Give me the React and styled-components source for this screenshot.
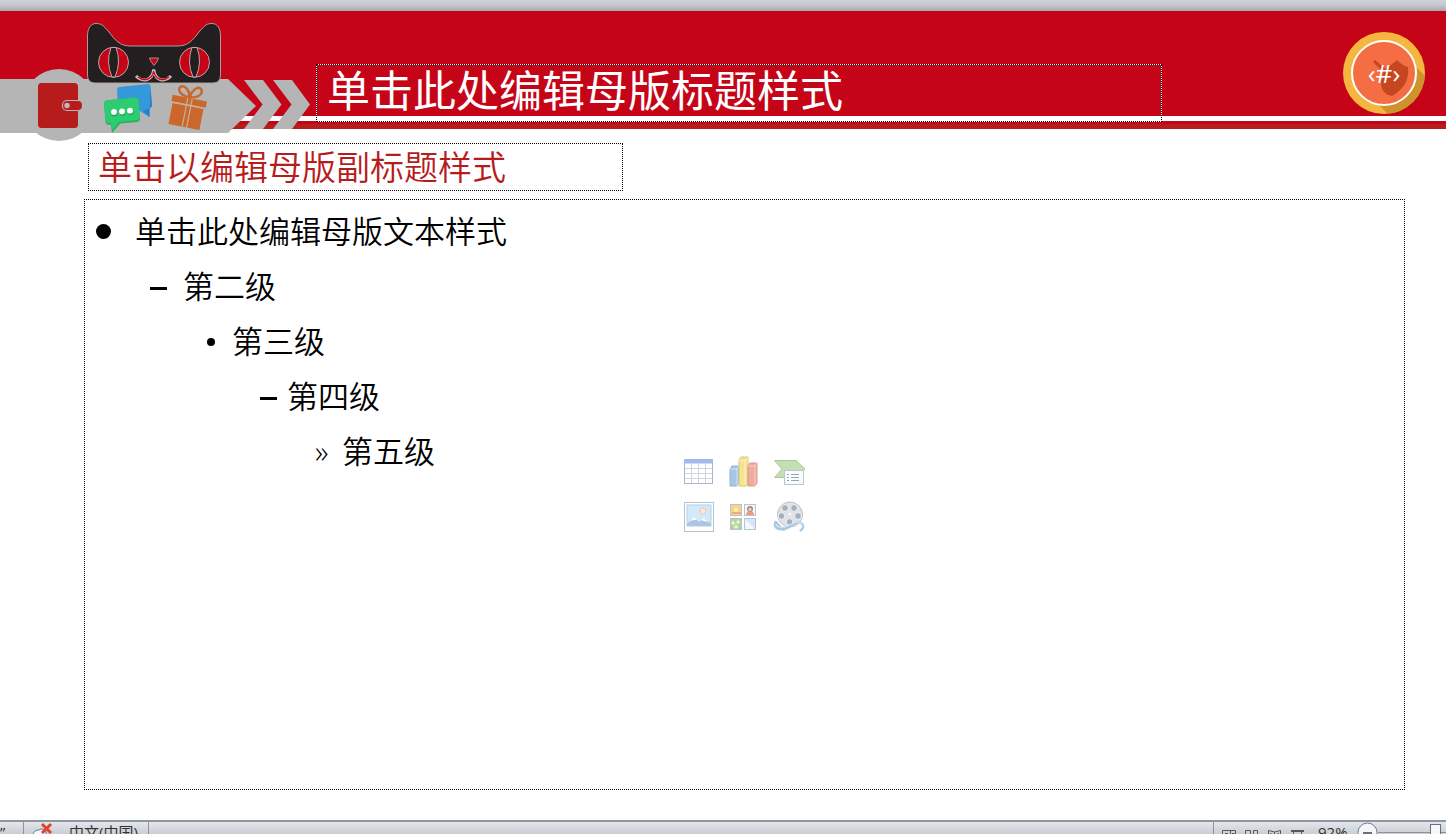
import React from 'react';
import styled, { createGlobalStyle } from 'styled-components';

const GlobalStyle = createGlobalStyle`
  *, *::before, *::after { box-sizing: border-box; }
  body {
    margin: 0;
    font-family: "Open Sans", "Noto Sans CJK SC", sans-serif;
    color: #000;
    overflow: hidden;
  }
  h1, h2, ul { margin: 0; padding: 0; font-weight: 400; }
  button { border: 0; padding: 0; background: none; display: block; }
  svg { display: block; overflow: visible; }
`;

const Page = styled.div`
  display: flex;
  flex-direction: column;
  height: 100vh;
`;

const Backdrop = styled.div`
  flex: 0 0 11px;
  background: linear-gradient(#ced2d7 0, #c5c9ce 5px, #a4a8ad 11px);
`;

const Slide = styled.main`
  flex: 1;
  min-height: 0;
  display: flex;
  flex-direction: column;
  background: #fff;
`;

const Header = styled.header`
  flex: 0 0 118px;
  display: flex;
  align-items: flex-start;
  background: linear-gradient(
    #c60418 105px, #fff 105px, #fff 110px,
    #c60418 110px, #c60418 113px, #b71c1c 113px
  );
`;

const Ribbon = styled.svg`
  flex: none;
  width: 311px;
  height: 130px;
  margin-bottom: -12px;
`;

const TitleBox = styled.h1`
  flex: 0 1 846px;
  height: 58px;
  margin: 53px 0 0 5px;
  padding: 0 10px;
  border: 1px dotted #000;
  background:
    linear-gradient(#fff, #fff) top / 100% 1px no-repeat border-box,
    linear-gradient(#fff, #fff) left / 1px 100% no-repeat border-box,
    linear-gradient(#fff, #fff) right / 1px 100% no-repeat border-box,
    linear-gradient(#fff, #fff) bottom / 100% 1px no-repeat border-box;
  color: #fff;
  font-size: 43px;
  line-height: 52px;
  white-space: nowrap;
`;

const Badge = styled.div`
  flex: none;
  display: grid;
  place-items: center;
  width: 82px;
  height: 82px;
  margin: 21px 21px 0 auto;
  color: #fff;
  font-size: 26px;
  line-height: 32px;

  > * { grid-area: 1 / 1; }
`;

const SubtitleBox = styled.h2`
  flex: 0 0 48px;
  width: 37%;
  margin: 14px 0 0 88px;
  padding: 0 9px;
  border: 1px dotted #000;
  color: #b71c1c;
  font-size: 34px;
  font-weight: 350;
  line-height: 46px;
  white-space: nowrap;
`;

const BodyBox = styled.section`
  flex: 1;
  display: grid;
  margin: 8px 41px 30px 84px;
  border: 1px dotted #000;

  > * { grid-area: 1 / 1; }
`;

const Levels = styled.ul`
  list-style: none;
  padding-top: 4px;
`;

const Level = styled.li`
  display: flex;
  align-items: center;
  height: 55px;
  padding-left: ${(p) => p.$indent}px;
  font-size: 31px;
  line-height: 55px;
  font-weight: 350;
`;

const Marker = styled.span`
  flex: 0 0 ${(p) => p.$width}px;
  line-height: 55px;
`;

const Disc = styled.span`
  display: block;
  width: ${(p) => p.$size}px;
  height: ${(p) => p.$size}px;
  border-radius: 50%;
  background: #000;
`;

const Dash = styled.span`
  display: block;
  width: 17px;
  height: 3px;
  margin-top: 4px;
  background: #000;
`;

const InsertGrid = styled.div`
  place-self: center;
  display: grid;
  grid-template-columns: repeat(3, 30px);
  grid-auto-rows: 30px;
  gap: 14px 15px;
  padding-right: 2px;
  opacity: 0.8;
`;

const StatusBar = styled.footer`
  flex: 0 0 14px;
  display: flex;
  align-items: flex-start;
  overflow: hidden;
  border-top: 2px solid #8d97a3;
  background: linear-gradient(#e3e6ea, #c9ced5);
  color: #333;
  font-size: 15px;
  line-height: 21px;
  white-space: nowrap;
`;

const StatusItem = styled.div`
  flex: none;
  height: 24px;
  width: ${(p) => p.$width}px;
  padding-left: ${(p) => p.$pad || 0}px;
  padding-top: ${(p) => p.$top || 0}px;
  border-right: ${(p) => (p.$divider ? '1px solid #8d939b' : '0')};
`;

const StatusRight = styled.div`
  display: flex;
  margin-left: auto;
  padding-left: 8px;
  border-left: 1px solid #8d939b;
`;

const ViewButton = styled.button`
  width: 23px;
  height: 24px;
  padding-top: 5px;
`;

const ZoomValue = styled.output`
  width: 38px;
  padding-left: 4px;
`;

const ZoomOut = styled.button`
  width: 21px;
  height: 21px;
  margin-left: 5px;
`;

const ZoomSlider = styled.input`
  appearance: none;
  width: 68px;
  height: 20px;
  margin: 1px 0 0;
  background: linear-gradient(#8a929c, #8a929c) 0 9px / 100% 1px no-repeat;

  &::-webkit-slider-thumb {
    appearance: none;
    width: 11px;
    height: 18px;
    border: 1px solid #66707c;
    background: #f6f7f9;
  }
`;

function RibbonArt() {
  return (
    <Ribbon viewBox="0 11 311 130" aria-hidden="true">
      <g fill="#b5b5b5">
        <path d="M0 79H228L256 106L228 133H0Z" />
        <circle cx="59" cy="105" r="36" />
        <path d="M244 80H263L281.500 104.500L263 129H244L262.500 104.500Z" />
        <path d="M273 80H292L310 104.500L292 129H273L291.500 104.500Z" />
      </g>
      <rect x="38" y="83" width="40" height="45" rx="3.500" fill="#b71c1c" />
      <rect x="62.500" y="100.500" width="20" height="10" rx="4.500" fill="#b71c1c" stroke="#b5b5b5" strokeWidth="1.200" />
      <circle cx="67" cy="105.500" r="2.700" fill="#c9b5b5" />

      <path d="M119 87L148 84Q150 84 150.500 86L152 106L149.500 109V117L139 110.500L121 112Q119 112 118.500 110L117 90Q117 87.500 119 87Z" fill="#3498db" />
      <path d="M150.500 88L152 106L149.500 108.500V117L143 111L148 109Q150 108 150 105Z" fill="#2980c9" />
      <path d="M106 100.500L135 97.500Q138 97.500 138.500 100L140 119Q140 121.500 137.500 122L120.500 123.500L112 133L111 125L108.500 125Q106 124.500 105.500 122L104 104Q104 101 106 100.500Z" fill="#27b463" />
      <path d="M106 100.500L135 97.500Q138 97.500 138.500 100L139.500 117Q139.500 119.500 137 120L119 122L112 130L111 123L108.500 123Q106 122.500 105.500 120L104 104Q104 101 106 100.500Z" fill="#2ecc71" />
      <g fill="#229a56"><circle cx="114.500" cy="113.500" r="3" /><circle cx="122.500" cy="112.800" r="3" /><circle cx="130.500" cy="112" r="3" /></g>
      <g fill="#fff"><circle cx="114" cy="112" r="2.900" /><circle cx="122" cy="111.500" r="2.900" /><circle cx="130" cy="110.700" r="2.900" /></g>

      <g transform="rotate(11 188 110)" fill="#cb672a">
        <path d="M170 98H205V104.500H170ZM171.500 106H203V127.500H171.500Z" />
        <path d="M185.500 98V127.500M190 98V127.500M170 105.200H205" stroke="#c4b0a2" strokeWidth="1.200" />
        <path d="M187 97C178 98 174 92 176 89C180 85 186 91 187 97C188 90 193 84 197 87C200 91 196 97 187 97Z" fill="none" stroke="#cb672a" strokeWidth="2.400" />
      </g>

      <path d="M87.500 36C87.500 28 91 23.500 96 23.500C101 23.500 103 25 109 32C115 40 120 46 130 46H178C188 46 193 40 199 32C205 25 207 23.500 212 23.500C217 23.500 220.500 28 220.500 36V75Q220.500 83 213 83H95Q87.500 83 87.500 75Z" fill="#231f20" stroke="#b9a8a8" strokeWidth="0.900" />
      {[113.5, 194.5].map((x) => (
        <g key={x} stroke="#b9a8a8" strokeWidth="1">
          <circle cx={x} cy="62.300" r="15" fill="#c60418" />
          <path d={`M${x - 2.5} 47.500Q${x - 8} 62 ${x - 1.5} 77H${x + 1.5}Q${x + 8} 62 ${x + 2.5} 47.500Z`} fill="#231f20" />
        </g>
      ))}
      <path d="M149.500 58H158.500Q158 61 154 65.500Q150 61 149.500 58Z" fill="#c60418" stroke="#b9a8a8" strokeWidth="0.800" />
      <path d="M136 76C142 82 152 82 153.700 69.500C155.500 82 165 82 171 76" fill="none" stroke="#c9b9b9" strokeWidth="3" />
      <path d="M138 77C143 81 152 81 153.700 71C155.500 81 164 81 169 77" fill="none" stroke="#c60418" strokeWidth="1.300" />
    </Ribbon>
  );
}

function CoinArt() {
  return (
    <svg width="82" height="82" viewBox="0 0 82 82" aria-hidden="true">
      <clipPath id="coin"><circle cx="41" cy="41" r="41" /></clipPath>
      <g clipPath="url(#coin)">
        <rect width="82" height="82" fill="#f5b640" />
        <path d="M72 34L86 48V86H49L35 72Z" fill="#cc942a" />
      </g>
      <circle cx="41" cy="41" r="32" fill="#f46d43" stroke="#fff" strokeWidth="2" />
      <path d="M54 28Q60 34 65 35Q67 54 49 64Q38 62 38 50L40 40L30 30L32 28L43 37Z" fill="#c6461f" />
    </svg>
  );
}

const TableIcon = () => (
  <svg width="30" height="30" viewBox="0 0 30 30">
    <rect x="0.500" y="1.500" width="28" height="24" fill="#fff" stroke="#91a3bf" />
    <rect x="0" y="1" width="29" height="4.500" fill="#8caaea" />
    <path d="M7.500 6V25M14.500 6V25M21.500 6V25M1 10.500H28M1 15.500H28M1 20.500H28" stroke="#c2c9d5" fill="none" />
  </svg>
);

const ChartIcon = () => (
  <svg width="30" height="30" viewBox="0 0 30 30">
    <path d="M1 11L3 8H10V25L8 28H1Z" fill="#8fbbe0" stroke="#7ca0c4" />
    <path d="M1 11H8V28M8 11L10 8" fill="none" stroke="#c4def1" />
    <path d="M10 2L12 -1H19V26L17 28H10Z" fill="#f3dc7d" stroke="#d6b957" />
    <path d="M16 3V27M10 3H17L19 0" fill="none" stroke="#fff1b0" />
    <path d="M19 8L21 5H28V25L26 28H19Z" fill="#e99886" stroke="#d57f70" />
    <path d="M19 8H26V28M26 8L28 5" fill="none" stroke="#f6c5ba" />
  </svg>
);

const SmartArtIcon = () => (
  <svg width="32" height="30" viewBox="0 0 32 30">
    <path d="M0.500 2.500H22L31 11L22 19.500H0.500L8 11Z" fill="#b5d9a2" stroke="#92bd7f" />
    <rect x="10.500" y="12.500" width="19" height="14" fill="#f9fbfd" stroke="#abb7c7" />
    <path d="M13 16.500H15M13 19.500H15M13 22.500H15M17 16.500H25M17 19.500H25M17 22.500H25" stroke="#7f8da5" />
  </svg>
);

const PictureIcon = () => (
  <svg width="30" height="30" viewBox="0 0 30 30">
    <rect x="0.500" y="0.500" width="29" height="29" fill="#fff" stroke="#a5b4c2" />
    <rect x="3" y="3" width="24" height="21" fill="#c7e4fa" stroke="#a4c4df" />
    <circle cx="19" cy="9" r="3" fill="#fce6ca" stroke="#efb7a0" />
    <path d="M3 22L10 15L15 20L20 16L27 22V24H3Z" fill="#9bb6da" />
    <path d="M6 19L10 15L13 18L10 18ZM17 18L20 16L24 20L20 19Z" fill="#fff" />
  </svg>
);

const ClipArtIcon = () => (
  <svg width="30" height="30" viewBox="0 0 30 30">
    <g stroke="#a7b5c6">
      <rect x="1.500" y="2.500" width="11" height="11" fill="#f9c967" />
      <rect x="15.500" y="2.500" width="11" height="11" fill="#f7f5f3" />
      <rect x="1.500" y="16.500" width="11" height="11" fill="#91ca9c" />
      <rect x="15.500" y="16.500" width="11" height="11" fill="#cedffa" />
    </g>
    <path d="M3 10H12V12H3Z" fill="#ee985d" />
    <circle cx="7" cy="8" r="2" fill="#fff09b" />
    <path d="M17 13C17 10 19 9 21 9S25 10 25 13Z" fill="#e9845f" />
    <circle cx="21" cy="7" r="3" fill="#8a6d65" /><circle cx="21" cy="7.500" r="1.700" fill="#efc2a4" />
    <path d="M4 18L5 20L7 21L5 22L4 24L3 22L2 21L3 20ZM9 17L10 19L12 20L10 21L9 23L8 21L7 20L8 19ZM7 22L8 24L10 25L8 26L7 27L6 26L4 25L6 24Z" fill="#f1f5a1" />
    <path d="M16 17L26 27H16Z" fill="#f2f6ff" />
  </svg>
);

const MediaIcon = () => (
  <svg width="32" height="31" viewBox="0 0 32 31">
    <circle cx="16" cy="12.500" r="12.500" fill="#d7dce1" stroke="#adb4bc" />
    <g fill="#8f9dab" stroke="#eef0f2">
      <circle cx="11" cy="6" r="3.400" /><circle cx="20" cy="6" r="3.400" />
      <circle cx="7.500" cy="14" r="3.400" /><circle cx="24" cy="14" r="3.400" />
      <circle cx="15.500" cy="20" r="3.400" />
    </g>
    <circle cx="16" cy="12" r="1.500" fill="#f6f7f8" />
    <path d="M2 19Q-1 25 5 27Q12 28 18 23Q25 18 28 22Q31 25 26 29M2 20Q6 26 11 28" fill="none" stroke="#92bddc" strokeWidth="2.600" />
    <path d="M2 22Q4 26 9 25Q18 22 22 20Q29 19 28 26" fill="none" stroke="#d6e9f6" strokeWidth="1" />
  </svg>
);

const inserts = [
  ['插入表格', TableIcon],
  ['插入图表', ChartIcon],
  ['插入 SmartArt 图形', SmartArtIcon],
  ['插入图片', PictureIcon],
  ['剪贴画', ClipArtIcon],
  ['插入媒体剪辑', MediaIcon],
];

const levels = [
  { text: '单击此处编辑母版文本样式', indent: 11, marker: 39, sign: <Disc $size={15} /> },
  { text: '第二级', indent: 65, marker: 33, sign: <Dash /> },
  { text: '第三级', indent: 122, marker: 25, sign: <Disc $size={8} /> },
  { text: '第四级', indent: 175, marker: 27, sign: <Dash /> },
  { text: '第五级', indent: 230, marker: 27, sign: '»' },
];

const views = [
  ['普通视图', 'M0.500 0.500H13.500V12H0.500ZM8.500 0.500V12M3 3.500H6M10 3.500H12.500M8.500 6.500H13.500'],
  ['幻灯片浏览', 'M0.500 0.500H5.500V4.500H0.500ZM8.500 0.500H12.500V4.500H8.500ZM0.500 7.500H5.500V11H0.500ZM8.500 7.500H12.500V11H8.500Z'],
  ['阅读视图', 'M0.500 0.500L6.500 2L12.500 0.500V9L6.500 11L0.500 9ZM6.500 2V11M2 3.500L5 4.500M8 4.500L11 3.500M2 6L5 7M8 7L11 6'],
  ['幻灯片放映', 'M0 0.500H13M0 1.500H13M2.500 2V7.500H10.500V2M6.500 7V11'],
];

export default function App() {
  return (
    <Page>
      <GlobalStyle />
      <Backdrop />
      <Slide>
        <Header>
          <RibbonArt />
          <TitleBox>单击此处编辑母版标题样式</TitleBox>
          <Badge>
            <CoinArt />
            <span>‹#›</span>
          </Badge>
        </Header>
        <SubtitleBox>单击以编辑母版副标题样式</SubtitleBox>
        <BodyBox>
          <Levels>
            {levels.map((l) => (
              <Level key={l.text} $indent={l.indent}>
                <Marker $width={l.marker}>{l.sign}</Marker>
                {l.text}
              </Level>
            ))}
          </Levels>
          <InsertGrid>
            {inserts.map(([label, Icon]) => (
              <button key={label} type="button" aria-label={label}>
                <Icon />
              </button>
            ))}
          </InsertGrid>
        </BodyBox>
      </Slide>
      <StatusBar>
        <StatusItem $width={24} $divider>”</StatusItem>
        <StatusItem $width={45} $pad={8} $top={2}>
          <svg width="22" height="22" viewBox="0 0 22 22" aria-hidden="true">
            <path d="M1 12Q1 6 7 6Q11 3 14 8V20H1Z" fill="#f7f9fb" stroke="#5b7896" />
            <path d="M10 0L19 9M19 0L10 9" stroke="#e2452f" strokeWidth="3" />
          </svg>
        </StatusItem>
        <StatusItem $width={80} $divider>中文(中国)</StatusItem>
        <StatusRight>
          {views.map(([label, d]) => (
            <ViewButton key={label} type="button" aria-label={label}>
              <svg width="15" height="14" viewBox="0 0 15 14">
                <path d={d} fill="none" stroke="#55585d" />
              </svg>
            </ViewButton>
          ))}
          <ZoomValue>92%</ZoomValue>
          <ZoomOut type="button" aria-label="缩小">
            <svg width="21" height="21" viewBox="0 0 21 21">
              <circle cx="10.500" cy="10.500" r="9.500" fill="#f3f5f7" stroke="#737d88" />
              <path d="M6 11.500H15" stroke="#66707c" strokeWidth="3" />
            </svg>
          </ZoomOut>
          <ZoomSlider type="range" min="0" max="100" defaultValue="92" aria-label="显示比例" />
        </StatusRight>
      </StatusBar>
    </Page>
  );
}
